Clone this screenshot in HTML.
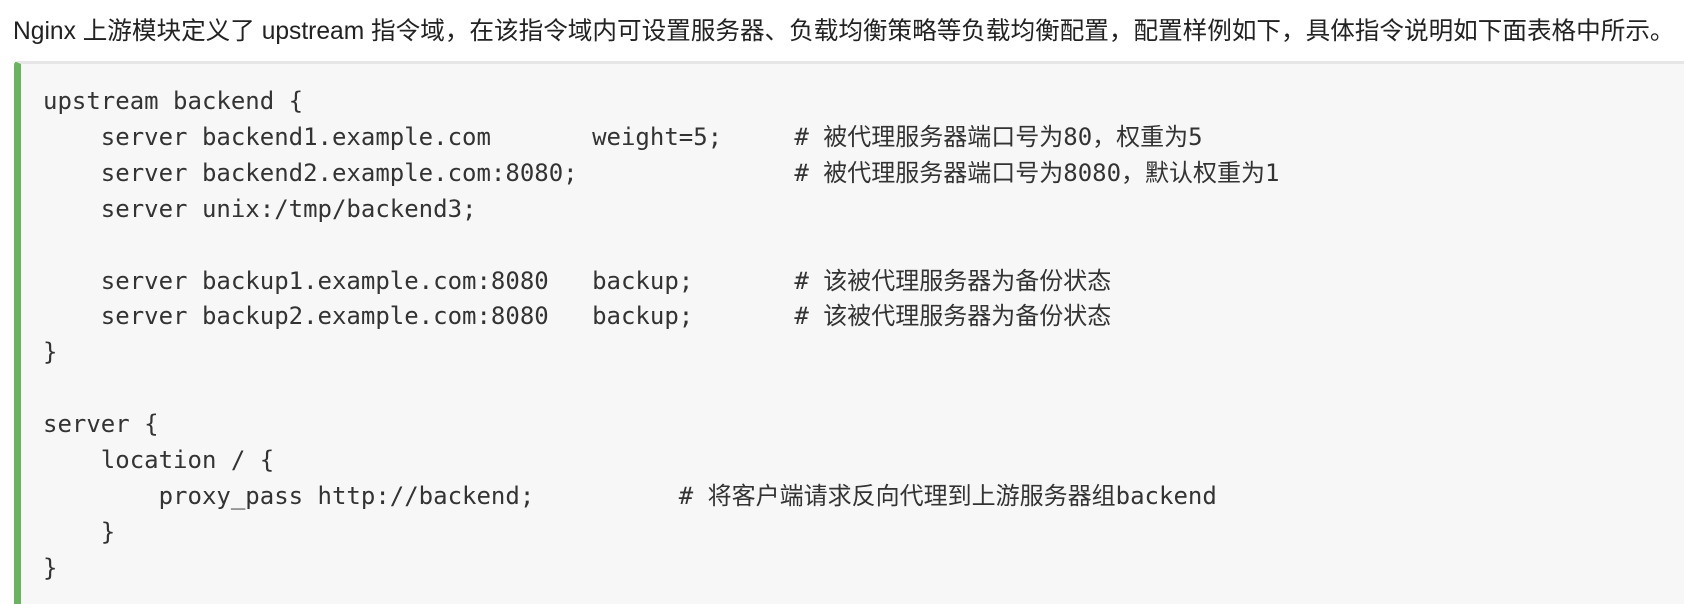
<!DOCTYPE html>
<html><head><meta charset="utf-8"><style>
html,body{margin:0;padding:0;background:#fff;width:1684px;height:584px;overflow:hidden}
p{position:absolute;left:13px;top:14px;margin:0;font:24.6px/36px "Liberation Sans","Noto Sans CJK SC",sans-serif;color:#222;white-space:nowrap}
.code{position:absolute;left:14px;top:61px;right:0;height:540px;background:#f7f7f7;border-top:3px solid #e6e6e6;border-left:7px solid #6bb35e;border-radius:4px 0 0 0}
pre{margin:0;position:absolute;left:22px;top:20px;font:24px/35.9px "DejaVu Sans Mono","Noto Sans CJK SC",monospace;color:#333}
</style></head><body>
<p>Nginx 上游模块定义了 upstream 指令域，在该指令域内可设置服务器、负载均衡策略等负载均衡配置，配置样例如下，具体指令说明如下面表格中所示。</p>
<div class="code"><pre>upstream backend {
    server backend1.example.com       weight=5;     # 被代理服务器端口号为80，权重为5
    server backend2.example.com:8080;               # 被代理服务器端口号为8080，默认权重为1
    server unix:/tmp/backend3;

    server backup1.example.com:8080   backup;       # 该被代理服务器为备份状态
    server backup2.example.com:8080   backup;       # 该被代理服务器为备份状态
}

server {
    location / {
        proxy_pass http://backend;          # 将客户端请求反向代理到上游服务器组backend
    }
}</pre></div>
</body></html>
